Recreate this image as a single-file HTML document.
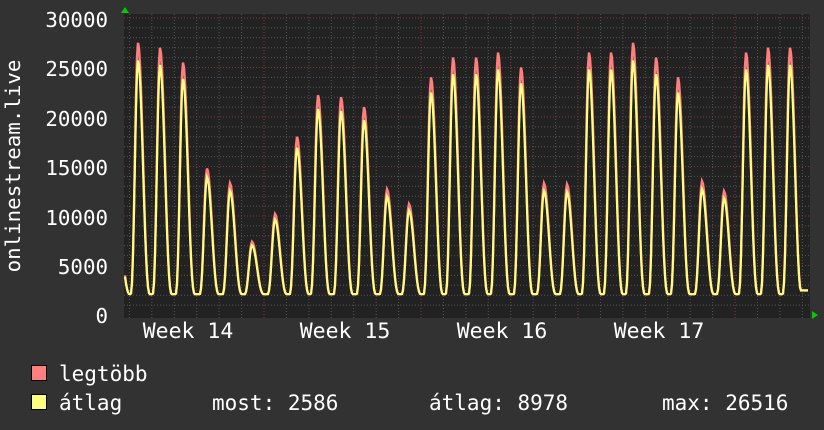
<!DOCTYPE html>
<html><head><meta charset="utf-8"><style>
html,body{margin:0;padding:0;background:#323232;width:824px;height:430px;overflow:hidden}
svg{display:block}
text{font-family:"DejaVu Sans Mono","Liberation Mono",monospace;fill:#fff}
</style></head><body>
<svg id="s" width="824" height="430" xmlns="http://www.w3.org/2000/svg">
<rect x="0" y="0" width="824" height="430" fill="#323232"/>
<rect x="124" y="14" width="686" height="304" fill="#222"/>
<g id="grid"></g>
<path id="red" fill="none" stroke="#ff7f7f" stroke-width="2.4"/>
<path id="yel" fill="none" stroke="#ffff7f" stroke-width="2.2"/>
<polygon points="121,13 125,7 129,13" fill="#0c0"/>
<polygon points="812,311 818,315 812,319" fill="#0c0"/>
<g font-size="20.8" text-anchor="end">
<text x="108" y="27">30000</text><text x="108" y="76">25000</text><text x="108" y="126">20000</text>
<text x="108" y="175">15000</text><text x="108" y="225">10000</text><text x="108" y="274">5000</text>
<text x="108" y="323">0</text></g>
<text transform="translate(20,166) rotate(-90)" font-size="20.8" text-anchor="middle">onlinestream.live</text>
<g font-size="21.5" text-anchor="middle">
<text x="188" y="338">Week 14</text><text x="345" y="338">Week 15</text>
<text x="502" y="338">Week 16</text><text x="659" y="338">Week 17</text></g>
<rect x="31.5" y="365.5" width="15" height="15" fill="#ff7f7f" stroke="#000"/>
<rect x="31.5" y="394.5" width="15" height="15" fill="#ffff7f" stroke="#000"/>
<g font-size="21">
<text x="59" y="381">legtöbb</text><text x="59" y="410">átlag</text>
<text x="212" y="410">most: 2586</text><text x="429" y="410">átlag: 8978</text><text x="662" y="410">max: 26516</text></g>
</svg>
<script>
var g=document.getElementById('grid'),h='';
function Y(v){return 315-v*297/30000;}
for(var v=1000;v<30000;v+=1000){if(v%5000)h+='<line x1="124" x2="810" y1="'+Y(v)+'" y2="'+Y(v)+'" stroke="#555" stroke-dasharray="1,2"/>';}
for(var x=264-22.43*6;x<810;x+=22.43){h+='<line y1="14" y2="318" x1="'+x+'" x2="'+x+'" stroke="#555" stroke-dasharray="1,2"/>';}
for(var v=5000;v<=30000;v+=5000)h+='<line x1="124" x2="810" y1="'+Y(v)+'" y2="'+Y(v)+'" stroke="#7a3a3a" stroke-dasharray="1,2"/>';
[264,421,578,735].forEach(function(x){h+='<line y1="14" y2="318" x1="'+x+'" x2="'+x+'" stroke="#7a3a3a" stroke-dasharray="1,2"/>';});
g.innerHTML=h;
var pk=[[118,9000],[138,27500],[160,27000],[183,25500],[207,14800],[230,13300],[252,7400],[275,10200],[297,18000],[318,22200],[341,22000],[364,21000],[387,12700],[409,11200],[431,24000],[453,26000],[476,26000],[498,26500],[521,25000],[544,13300],[567,13200],[589,26500],[611,26500],[633,27500],[656,26000],[678,24000],[702,13500],[724,12500],[746,26500],[768,27000],[790,27000]];
function val(x){var best=2100;for(var i=0;i<pk.length;i++){var d=x-pk[i][0];var w=d<0?7.5:12;var u=Math.abs(d)/w;if(u>=1)continue;var f=0.5*(1+Math.cos(Math.PI*u));f=Math.pow(f,1.3);var b=2100+(pk[i][1]-2100)*f;if(b>best)best=b;}return best;}
var r='',y='';
for(var x=125;x<=808;x+=1){var v=val(x);if(x>800)v=2500;
r+=(x==125?'M':'L')+x+','+Y(v).toFixed(1);y+=(x==125?'M':'L')+x+','+Y(v>2300?2100+(v-2100)*0.93:v).toFixed(1);}
document.getElementById('red').setAttribute('d',r);document.getElementById('yel').setAttribute('d',y);
</script>
</body></html>
